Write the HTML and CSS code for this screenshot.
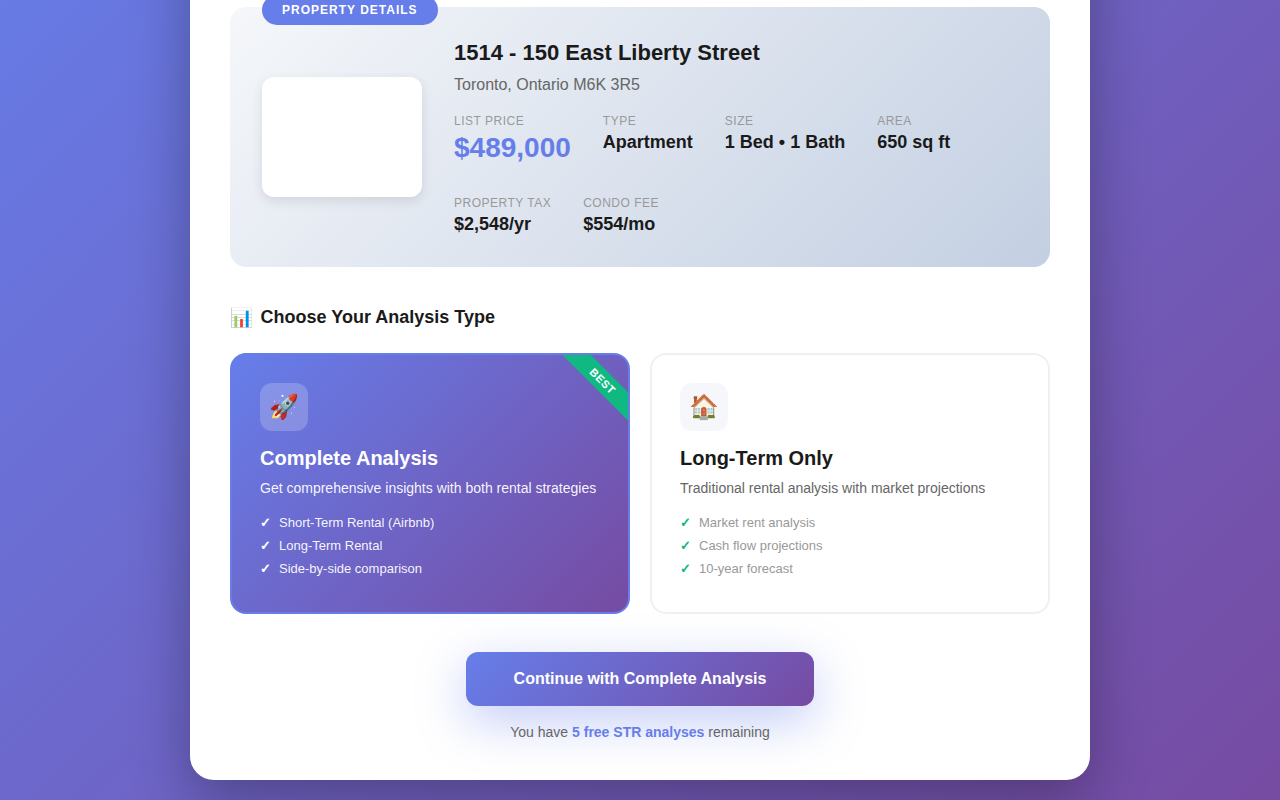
FILE: index.html
```html
<!DOCTYPE html>
<html lang="en">
<head>
<meta charset="utf-8">
<title>Property Analysis</title>
<link rel="stylesheet" href="styles.css">
</head>
<body>
<main class="modal">
  <section class="property">
    <span class="property-badge">Property Details</span>
    <div class="property-image"></div>
    <div class="property-info">
      <h2 class="address">1514 - 150 East Liberty Street</h2>
      <p class="city">Toronto, Ontario M6K 3R5</p>
      <div class="stats">
        <div class="stat"><span class="label">List Price</span><span class="value price">$489,000</span></div>
        <div class="stat"><span class="label">Type</span><span class="value">Apartment</span></div>
        <div class="stat"><span class="label">Size</span><span class="value">1 Bed • 1 Bath</span></div>
        <div class="stat"><span class="label">Area</span><span class="value">650 sq ft</span></div>
        <div class="stat"><span class="label">Property Tax</span><span class="value">$2,548/yr</span></div>
        <div class="stat"><span class="label">Condo Fee</span><span class="value">$554/mo</span></div>
      </div>
    </div>
  </section>
  <h3 class="section-title"><span class="section-icon">📊</span><span>Choose Your Analysis Type</span></h3>
  <div class="options">
    <article class="option selected">
      <span class="ribbon">BEST</span>
      <div class="option-icon">🚀</div>
      <h4 class="option-title">Complete Analysis</h4>
      <p class="option-text">Get comprehensive insights with both rental strategies</p>
      <ul class="features">
        <li>Short-Term Rental (Airbnb)</li>
        <li>Long-Term Rental</li>
        <li>Side-by-side comparison</li>
      </ul>
    </article>
    <article class="option">
      <div class="option-icon">🏠</div>
      <h4 class="option-title">Long-Term Only</h4>
      <p class="option-text">Traditional rental analysis with market projections</p>
      <ul class="features">
        <li>Market rent analysis</li>
        <li>Cash flow projections</li>
        <li>10-year forecast</li>
      </ul>
    </article>
  </div>
  <footer class="actions">
    <button class="continue">Continue with Complete Analysis</button>
    <p class="remaining">You have <strong>5 free STR analyses</strong> remaining</p>
  </footer>
</main>
</body>
</html>
```
FILE: styles.css
```css
* { box-sizing: border-box; margin: 0; padding: 0; }
body {
  height: 800px;
  overflow: hidden;
  padding-bottom: 20px;
  display: flex;
  flex-direction: column;
  justify-content: flex-end;
  align-items: center;
  font-family: "Liberation Sans", Arial, sans-serif;
  color: #1a1a1a;
  background: linear-gradient(135deg, #667eea 0%, #764ba2 100%) 0 100% / 100% 960px no-repeat;
}
.modal {
  flex: none;
  width: 900px;
  height: 900px;
  padding: 127px 40px 0;
  background: #fff;
  border-radius: 24px;
  box-shadow: 0 20px 60px rgba(0, 0, 0, .3);
}
.property {
  position: relative;
  display: flex;
  align-items: center;
  gap: 32px;
  height: 260px;
  padding: 32px;
  border-radius: 16px;
  background: linear-gradient(135deg, #f5f7fa 0%, #c3cfe2 100%);
}
.property-badge {
  position: absolute;
  top: -12px;
  left: 32px;
  padding: 8px 20px;
  border-radius: 20px;
  background: #667eea;
  color: #fff;
  font-size: 12px;
  line-height: 14px;
  font-weight: 600;
  letter-spacing: 1px;
  text-transform: uppercase;
}
.property-image {
  flex: none;
  width: 160px;
  height: 120px;
  border-radius: 12px;
  background: #fff;
  box-shadow: 0 4px 12px rgba(0, 0, 0, .1);
}
.property-info { flex: 1; align-self: flex-start; }
.address { font-size: 22px; line-height: 27px; margin-bottom: 10px; }
.city { font-size: 16px; line-height: 18px; color: #666; margin-bottom: 20px; }
.stats { display: flex; flex-wrap: wrap; gap: 32px; }
.stat { display: flex; flex-direction: column; gap: 4px; }
.label { font-size: 12px; line-height: 14px; letter-spacing: .5px; text-transform: uppercase; color: #999; }
.value { font-size: 18px; line-height: 20px; font-weight: 700; }
.price { font-size: 28px; line-height: 32px; color: #667eea; }
.section-title { display: flex; gap: 8px; margin-top: 40px; font-size: 18px; line-height: 21px; }
.section-icon { width: 22.6px; font-size: 18.5px; line-height: 21px; }
.options { display: grid; grid-template-columns: 1fr 1fr; gap: 20px; margin-top: 25px; }
.option {
  position: relative;
  overflow: hidden;
  height: 261px;
  padding: 28px;
  border: 2px solid #f0f0f0;
  border-radius: 16px;
  background: #fff;
}
.option-icon {
  display: flex;
  align-items: center;
  justify-content: center;
  width: 48px;
  height: 48px;
  margin-bottom: 16px;
  border-radius: 12px;
  background: #f5f7fa;
  font-size: 24px;
}
.option-title { font-size: 20px; line-height: 23px; margin-bottom: 8px; }
.option-text { font-size: 14px; line-height: 21px; color: #666; margin-bottom: 16px; }
.features { list-style: none; font-size: 13px; line-height: 15px; color: #999; }
.features li { display: flex; gap: 8px; margin-bottom: 8px; }
.features li::before { content: "✓"; color: #10b981; font-weight: 700; }
.selected { border-color: #667eea; color: #fff; background: linear-gradient(135deg, #667eea 0%, #764ba2 100%); }
.selected .option-icon { background: rgba(255, 255, 255, .2); }
.selected .option-text { color: rgba(255, 255, 255, .95); }
.selected .features { color: rgba(255, 255, 255, .95); }
.selected .features li::before { color: #fff; }
.ribbon {
  position: absolute;
  top: 16px;
  right: -30px;
  padding: 4px 40px;
  background: #10b981;
  color: #fff;
  font-size: 11px;
  line-height: 12px;
  font-weight: 700;
  letter-spacing: .5px;
  transform: rotate(45deg);
}
.actions { margin-top: 38px; text-align: center; }
.continue {
  height: 54px;
  padding: 0 48px;
  border: 0;
  border-radius: 12px;
  background: linear-gradient(135deg, #667eea 0%, #764ba2 100%);
  box-shadow: 0 15px 50px rgba(102, 126, 234, .4);
  color: #fff;
  font: 600 16px "Liberation Sans", Arial, sans-serif;
}
.remaining { margin-top: 18px; font-size: 14px; line-height: 16px; color: #666; }
.remaining strong { color: #667eea; }
```
